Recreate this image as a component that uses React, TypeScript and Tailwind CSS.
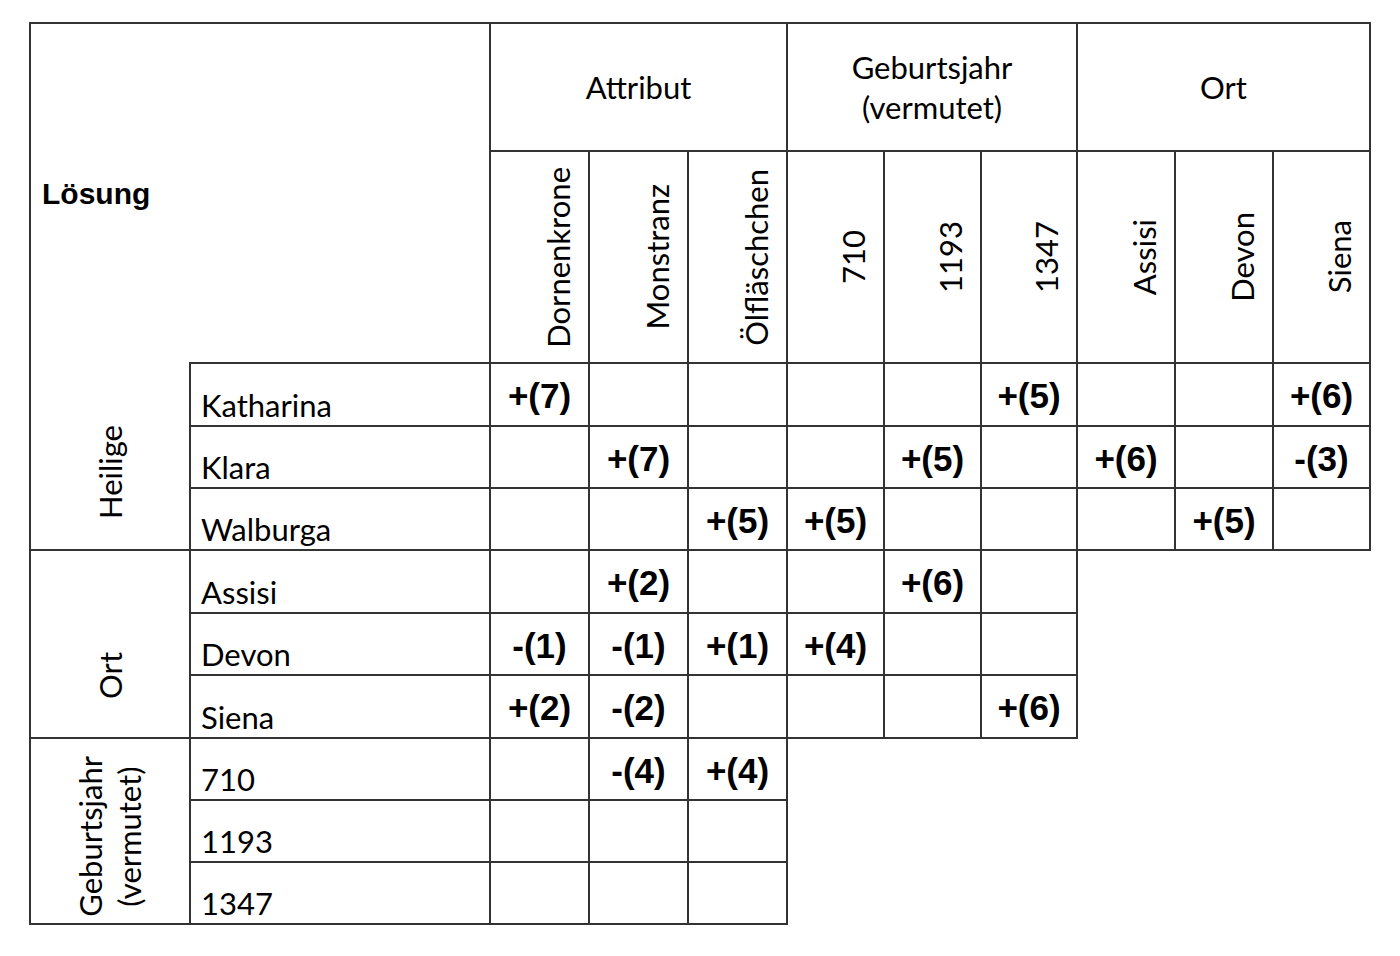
import React from 'react'

const colWidths = [160, 300, 99, 99, 99, 97, 97, 96, 98, 98, 97]

const subHeaders = [
  'Dornenkrone',
  'Monstranz',
  'Ölfläschchen',
  '710',
  '1193',
  '1347',
  'Assisi',
  'Devon',
  'Siena'
]

type Row = { name: string; h: string; cells: string[] }

const heilige: Row[] = [
  { name: 'Katharina', h: 'h-[63px]', cells: ['+(7)', '', '', '', '', '+(5)', '', '', '+(6)'] },
  { name: 'Klara', h: 'h-[62px]', cells: ['', '+(7)', '', '', '+(5)', '', '+(6)', '', '-(3)'] },
  { name: 'Walburga', h: 'h-[62px]', cells: ['', '', '+(5)', '+(5)', '', '', '', '+(5)', ''] }
]

const orte: Row[] = [
  { name: 'Assisi', h: 'h-[63px]', cells: ['', '+(2)', '', '', '+(6)', ''] },
  { name: 'Devon', h: 'h-[62px]', cells: ['-(1)', '-(1)', '+(1)', '+(4)', '', ''] },
  { name: 'Siena', h: 'h-[63px]', cells: ['+(2)', '-(2)', '', '', '', '+(6)'] }
]

const jahre: Row[] = [
  { name: '710', h: 'h-[62px]', cells: ['', '-(4)', '+(4)'] },
  { name: '1193', h: 'h-[62px]', cells: ['', '', ''] },
  { name: '1347', h: 'h-[62px]', cells: ['', '', ''] }
]

const cell = 'border-2 border-[#333333] p-0'
const arial = { fontFamily: '"Liberation Sans", Arial, sans-serif' }

const NameCell = ({ name }: { name: string }) => (
  <td className={`${cell} align-bottom pl-[10px] pb-[2px] text-[31px] leading-[36px] text-black`}>
    {name}
  </td>
)

const ValueCell = ({ value }: { value: string }) => (
  <td className={`${cell} text-center align-middle pt-[4px] text-[35px] font-bold text-black`} style={arial}>
    {value}
  </td>
)

// rotated label in the left group column (Heilige / Ort / Geburtsjahr)
const GroupCell = ({ children, pb, top }: { children: React.ReactNode; pb: string; top?: boolean }) => (
  <td rowSpan={3} className={`${cell} align-bottom ${top ? '[border-top-style:hidden]' : ''}`}>
    <div className={`flex justify-center ${pb}`}>
      <span className="rotate-180 text-center text-[31px] leading-[39px] text-black [writing-mode:vertical-rl]">
        {children}
      </span>
    </div>
  </td>
)

const BodyRows = ({
  rows,
  label,
  pb,
  top
}: {
  rows: Row[]
  label: React.ReactNode
  pb: string
  top?: boolean
}) => (
  <>
    {rows.map((r, i) => (
      <tr key={r.name} className={r.h}>
        {i === 0 && (
          <GroupCell pb={pb} top={top}>
            {label}
          </GroupCell>
        )}
        <NameCell name={r.name} />
        {r.cells.map((v, j) => (
          <ValueCell key={j} value={v} />
        ))}
      </tr>
    ))}
  </>
)

export default function App() {
  return (
    <div
      className="min-h-[956px] w-[1400px] bg-white pl-[29px] pt-[22px]"
      style={{ fontFamily: 'Lato, "Open Sans", sans-serif' }}
    >
      <table className="w-[1342px] table-fixed border-collapse">
        <colgroup>
          {colWidths.map((w, i) => (
            <col key={i} style={{ width: w }} />
          ))}
        </colgroup>
        <tbody>
          <tr className="h-[128px]">
            <td
              rowSpan={2}
              className={`${cell} [border-right-style:hidden] [border-bottom-style:hidden] align-middle pl-[11px]`}
            >
              <span className="whitespace-nowrap text-[30px] font-bold text-black" style={arial}>
                Lösung
              </span>
            </td>
            <td rowSpan={2} className={`${cell} [border-left-style:hidden]`} />
            <td colSpan={3} className={`${cell} text-center align-middle text-[31px] leading-[40px] text-black`}>
              Attribut
            </td>
            <td colSpan={3} className={`${cell} text-center align-middle text-[31px] leading-[40px] text-black`}>
              Geburtsjahr
              <br />
              (vermutet)
            </td>
            <td colSpan={3} className={`${cell} text-center align-middle text-[31px] leading-[40px] text-black`}>
              Ort
            </td>
          </tr>
          <tr className="h-[212px]">
            {subHeaders.map((s) => (
              <td key={s} className={`${cell} align-middle`}>
                <div className="flex h-[208px] items-center justify-end pr-[11px]">
                  <span className="rotate-180 text-[31px] leading-[38px] text-black [writing-mode:vertical-rl]">
                    {s}
                  </span>
                </div>
              </td>
            ))}
          </tr>
          <BodyRows rows={heilige} label="Heilige" pb="pb-[30px]" top />
          <BodyRows rows={orte} label="Ort" pb="pb-[38px]" />
          <BodyRows
            rows={jahre}
            pb="pb-[6px]"
            label={
              <>
                Geburtsjahr
                <br />
                (vermutet)
              </>
            }
          />
        </tbody>
      </table>
    </div>
  )
}
